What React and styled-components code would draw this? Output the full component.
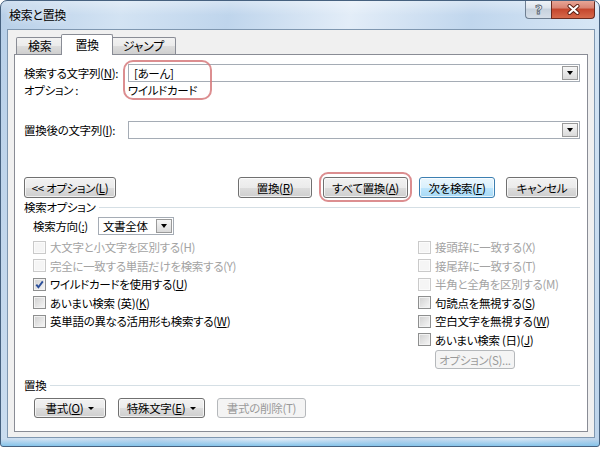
import React from 'react';
import styled, { createGlobalStyle } from 'styled-components';

const GlobalStyle = createGlobalStyle`
  html, body { margin: 0; padding: 0; background: #fff; }
  body {
    font-family: "Noto Sans CJK JP", "Noto Sans", sans-serif;
    font-size: 11.5px;
    letter-spacing: -0.3px;
    color: #000;
    font-feature-settings: "palt";
  }
  *, *::before, *::after { box-sizing: border-box; }
  button { font: inherit; letter-spacing: inherit; font-feature-settings: "palt"; color: inherit; }
`;

const Window = styled.div`
  width: 600px;
  height: 447px;
  display: flex;
  flex-direction: column;
  border: 1px solid #46617f;
  border-radius: 7px 7px 3px 3px;
  overflow: hidden;
  background:
    linear-gradient(0deg, #86c4ea 0, rgba(134, 196, 234, 0) 7px),
    linear-gradient(180deg, rgba(255, 255, 255, 0.35) 0, rgba(255, 255, 255, 0) 14px),
    linear-gradient(100deg, #b7cfe8 0%, #d3e3f3 18%, #bfd5ec 34%, #e3edf8 52%, #c0d6ed 70%, #d6e6f5 88%, #bcd3ea 100%);
`;

const TitleBar = styled.div`
  height: 28px;
  flex: none;
  display: flex;
  align-items: flex-start;
  padding-left: 8px;
`;

const Title = styled.div`
  line-height: 27px;
  font-size: 12px;
  text-shadow: 0 0 6px rgba(255, 255, 255, 0.9);
`;

const Caption = styled.div`
  margin-left: auto;
  margin-right: 4px;
  margin-top: -1px;
  display: flex;
`;

const HelpButton = styled.div`
  width: 26px;
  height: 19px;
  border: 1px solid #6f7f92;
  border-top: none;
  border-right: none;
  border-radius: 0 0 0 4px;
  background: linear-gradient(#f2f5f9, #dde4ec 45%, #c6d1dd 50%, #d5dee8);
  display: flex;
  align-items: center;
  justify-content: center;
  font-family: "DejaVu Sans", sans-serif;
  font-weight: bold;
  font-size: 13px;
  color: #f4f6f8;
  -webkit-text-stroke: 0.8px #56626e;
`;

const CloseButton = styled.div`
  width: 44px;
  height: 19px;
  border: 1px solid #6a2b20;
  border-top: none;
  border-radius: 0 0 4px 0;
  background: linear-gradient(#eaaa9b, #d98372 45%, #c4452c 50%, #d66a4c);
  display: flex;
  align-items: center;
  justify-content: center;
`;

const Client = styled.div`
  flex: 1;
  margin: 0 4px 8px 6px;
  border: 1px solid #7f97b0;
  background: #f0f0f0;
  padding: 4px 6px 5px 6px;
  display: flex;
  flex-direction: column;
`;

const TabRow = styled.div`
  display: flex;
  align-items: flex-end;
  height: 21px;
  padding-left: 2px;
  margin-bottom: -1px;
  position: relative;
  z-index: 1;
`;

const Tab = styled.div`
  position: relative;
  height: ${p => (p.$active ? 21 : 17)}px;
  margin: 0 ${p => (p.$active ? -2 : 0)}px ${p => (p.$active ? 0 : 1)}px;
  padding: 0 ${p => (p.$active ? 13 : 11)}px;
  border: 1px solid #898c95;
  border-bottom: none;
  border-radius: 2px 2px 0 0;
  background: ${p =>
    p.$active ? '#fff' : 'linear-gradient(#f2f2f2, #ebebeb 50%, #dddddd 50%, #cfcfcf)'};
  line-height: ${p => (p.$active ? 19 : 16)}px;
  font-size: 12px;
  z-index: ${p => (p.$active ? 2 : 1)};
`;

const Panel = styled.div`
  flex: 1;
  position: relative;
  background: #fff;
  border: 1px solid #898c95;
  padding: 9px 7px 0 9px;
  display: flex;
  flex-direction: column;
`;

const FieldRow = styled.div`
  display: flex;
  align-items: center;
  height: ${p => p.$h || 18}px;
  margin-top: ${p => p.$mt || 0}px;
  line-height: 16px;
`;

const FieldLabel = styled.div`
  width: 104px;
  flex: none;
  white-space: nowrap;
`;

const ComboBox = styled.div`
  flex: ${p => (p.$w ? 'none' : 1)};
  width: ${p => (p.$w ? `${p.$w}px` : 'auto')};
  height: 18px;
  border: 1px solid #a5acb5;
  background: #fff;
  display: flex;
  align-items: center;
  padding: 0 1px 0 ${p => p.$pl || 5}px;
  line-height: 16px;
`;

const DropButton = styled.span`
  margin-left: auto;
  width: 16px;
  height: 14px;
  flex: none;
  border: 1px solid #9a9a9a;
  background: linear-gradient(#f6f6f6, #dadada);
  display: flex;
  align-items: center;
  justify-content: center;
  &::after {
    content: '';
    border-left: 3.5px solid transparent;
    border-right: 3.5px solid transparent;
    border-top: 4px solid #000;
  }
`;

const FieldMark = styled.span`
  position: absolute;
  left: 108px;
  top: 5px;
  width: 89px;
  height: 40px;
  border: 2px solid rgba(214, 122, 124, 0.85);
  border-radius: 10px;
  pointer-events: none;
`;

const ButtonRow = styled.div`
  display: flex;
  align-items: center;
  margin-top: ${p => p.$mt || 0}px;
  margin-left: ${p => p.$ml || 0}px;
  padding-right: ${p => p.$pr || 0}px;
  gap: ${p => p.$gap || 0}px;
`;

const ButtonGroup = styled.div`
  margin-left: auto;
  display: flex;
  gap: 11px;
`;

const Button = styled.button`
  width: ${p => p.$w}px;
  height: ${p => p.$h || 21}px;
  padding: 0;
  border: 1px solid ${p => (p.$default ? '#3c7fb1' : p.disabled ? '#b5b8bb' : '#707070')};
  border-radius: 3px;
  background: ${p =>
    p.$default
      ? 'linear-gradient(#eaf6fd, #d9f0fc 50%, #bee6fd 50%, #a7d9f5)'
      : p.disabled
      ? '#f4f4f4'
      : 'linear-gradient(#f2f2f2, #ebebeb 50%, #dddddd 50%, #cfcfcf)'};
  box-shadow: inset 0 0 0 1px ${p => (p.disabled ? '#f4f4f4' : 'rgba(255, 255, 255, 0.7)')};
  color: ${p => (p.disabled ? '#9a9a9a' : '#000')};
  display: flex;
  align-items: center;
  justify-content: center;
  line-height: 16px;
  white-space: nowrap;
`;

const MenuArrow = styled.span`
  margin-left: 5px;
  border-left: 3px solid transparent;
  border-right: 3px solid transparent;
  border-top: 3px solid #000;
`;

const ButtonMark = styled.span`
  position: relative;
  display: flex;
  &::after {
    content: '';
    position: absolute;
    inset: -5px -4px -4px -4px;
    border: 2px solid rgba(214, 122, 124, 0.85);
    border-radius: 9px;
    pointer-events: none;
  }
`;

const SectionHeader = styled.div`
  display: flex;
  align-items: center;
  gap: 4px;
  height: 16px;
  line-height: 16px;
  margin-top: ${p => p.$mt || 0}px;
  &::after {
    content: '';
    flex: 1;
    height: 1px;
    background: #d5dfe5;
  }
`;

const DirectionRow = styled.div`
  display: flex;
  align-items: center;
  height: 18px;
  margin: 2px 0 0 9px;
  line-height: 16px;
  gap: 10px;
`;

const CheckGrid = styled.div`
  display: grid;
  grid-template-columns: 385px 1fr;
  margin: 3px 0 0 9px;
`;

const CheckColumn = styled.div`
  display: flex;
  flex-direction: column;
`;

const CheckRow = styled.div`
  display: flex;
  align-items: center;
  gap: 4px;
  height: 18.5px;
  line-height: 16px;
  white-space: nowrap;
  color: ${p => (p.$disabled ? '#a3a3a3' : '#000')};
`;

const Box = styled.span`
  width: 13px;
  height: 13px;
  flex: none;
  border: 1px solid ${p => (p.$disabled ? '#cacaca' : '#8e8f8f')};
  background: ${p => (p.$disabled ? '#f5f5f5' : 'linear-gradient(135deg, #cfcfcf, #f7f7f7)')};
  box-shadow: inset 0 0 0 1px ${p => (p.$disabled ? '#fbfbfb' : '#f2f2f2')};
  display: flex;
  align-items: center;
  justify-content: center;
`;

const SubButtonRow = styled.div`
  margin: 1px 0 0 17px;
`;

const Check = ({ label, disabled, checked }) => (
  <CheckRow $disabled={disabled}>
    <Box $disabled={disabled}>
      {checked && (
        <svg width="9" height="9" viewBox="0 0 9 9">
          <path d="M1.3 4.6 L3.4 7.2 L7.8 1.4" fill="none" stroke="#2b4f9a" strokeWidth="1.9" />
        </svg>
      )}
    </Box>
    <span>{label}</span>
  </CheckRow>
);

export default function App() {
  return (
    <>
      <GlobalStyle />
      <Window>
        <TitleBar>
          <Title>検索と置換</Title>
          <Caption>
            <HelpButton>?</HelpButton>
            <CloseButton>
              <svg width="15" height="11" viewBox="0 0 15 11">
                <path d="M3.5 2 L11.5 9 M11.5 2 L3.5 9" stroke="#5a1d12" strokeWidth="4" strokeLinecap="round" />
                <path d="M3.5 2 L11.5 9 M11.5 2 L3.5 9" stroke="#fff" strokeWidth="2.2" strokeLinecap="round" />
              </svg>
            </CloseButton>
          </Caption>
        </TitleBar>
        <Client>
          <TabRow>
            <Tab>検索</Tab>
            <Tab $active>置換</Tab>
            <Tab>ジャンプ</Tab>
          </TabRow>
          <Panel>
            <FieldMark />
            <FieldRow>
              <FieldLabel>検索する文字列(<u>N</u>):</FieldLabel>
              <ComboBox>
                [あーん]
                <DropButton />
              </ComboBox>
            </FieldRow>
            <FieldRow $h={16}>
              <FieldLabel>オプション :</FieldLabel>
              <span>ワイルドカード</span>
            </FieldRow>
            <FieldRow $mt={23}>
              <FieldLabel>置換後の文字列(<u>I</u>):</FieldLabel>
              <ComboBox>
                <DropButton />
              </ComboBox>
            </FieldRow>

            <ButtonRow $mt={38} $pr={2}>
              <Button $w={92}><span>&lt;&lt; オプション(<u>L</u>)</span></Button>
              <ButtonGroup>
                <Button $w={74}><span>置換(<u>R</u>)</span></Button>
                <ButtonMark>
                  <Button $w={85}><span>すべて置換(<u>A</u>)</span></Button>
                </ButtonMark>
                <Button $w={76} $default><span>次を検索(<u>F</u>)</span></Button>
                <Button $w={72}>キャンセル</Button>
              </ButtonGroup>
            </ButtonRow>

            <SectionHeader $mt={1}>検索オプション</SectionHeader>
            <DirectionRow>
              <span>検索方向(<u>:</u>)</span>
              <ComboBox $w={76} $pl={4}>
                文書全体
                <DropButton />
              </ComboBox>
            </DirectionRow>

            <CheckGrid>
              <CheckColumn>
                <Check disabled label="大文字と小文字を区別する(H)" />
                <Check disabled label="完全に一致する単語だけを検索する(Y)" />
                <Check checked label={<>ワイルドカードを使用する(<u>U</u>)</>} />
                <Check label={<>あいまい検索 (英)(<u>K</u>)</>} />
                <Check label={<>英単語の異なる活用形も検索する(<u>W</u>)</>} />
              </CheckColumn>
              <CheckColumn>
                <Check disabled label="接頭辞に一致する(X)" />
                <Check disabled label="接尾辞に一致する(T)" />
                <Check disabled label="半角と全角を区別する(M)" />
                <Check label={<>句読点を無視する(<u>S</u>)</>} />
                <Check label={<>空白文字を無視する(<u>W</u>)</>} />
                <Check label={<>あいまい検索 (日)(<u>J</u>)</>} />
                <SubButtonRow>
                  <Button $w={80} $h={19} disabled>オプション(S)...</Button>
                </SubButtonRow>
              </CheckColumn>
            </CheckGrid>

            <SectionHeader $mt={8}>置換</SectionHeader>
            <ButtonRow $mt={5} $ml={10} $gap={12}>
              <Button $w={72} $h={20}>
                <span>書式(<u>O</u>)</span><MenuArrow />
              </Button>
              <Button $w={87} $h={20}>
                <span>特殊文字(<u>E</u>)</span><MenuArrow />
              </Button>
              <Button $w={89} $h={20} disabled>書式の削除(T)</Button>
            </ButtonRow>
          </Panel>
        </Client>
      </Window>
    </>
  );
}
